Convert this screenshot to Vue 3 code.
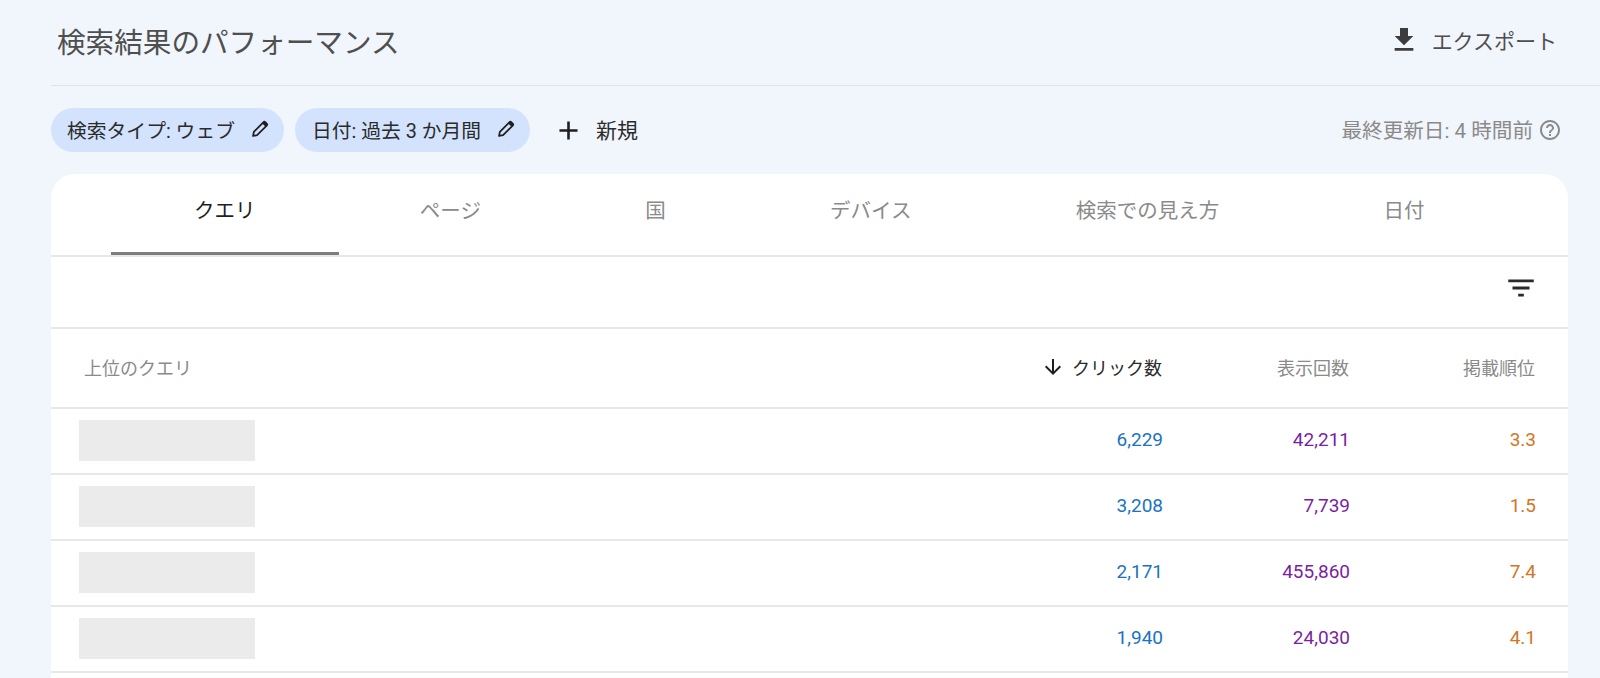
<script setup>
const tabs = [
  { label: 'クエリ', active: true },
  { label: 'ページ' },
  { label: '国' },
  { label: 'デバイス' },
  { label: '検索での見え方' },
  { label: '日付' },
]

const rows = [
  { clicks: '6,229', impressions: '42,211', position: '3.3' },
  { clicks: '3,208', impressions: '7,739', position: '1.5' },
  { clicks: '2,171', impressions: '455,860', position: '7.4' },
  { clicks: '1,940', impressions: '24,030', position: '4.1' },
]

// narrow outlined pencil, the filled part is the cap
const pencilBody = 'M4.4 19.6l.9-4.4L15.6 4.7a1.7 1.7 0 0 1 2.4 0l1.3 1.3a1.7 1.7 0 0 1 0 2.4L8.8 18.7z'
const pencilCap = 'M14.4 5.9l1.2-1.2a1.7 1.7 0 0 1 2.4 0l1.3 1.3a1.7 1.7 0 0 1 0 2.4l-1.2 1.2z'
</script>

<template>
  <div class="page">
    <header class="top-bar">
      <h1 class="title">検索結果のパフォーマンス</h1>
      <div class="export">
        <svg class="export-icon" viewBox="0 0 24 24"><path d="M19 9h-4V3H9v6H5l7 7 7-7zM5 18v2h14v-2H5z" /></svg>
        <span>エクスポート</span>
      </div>
    </header>

    <div class="filters">
      <div class="chip">
        <span>検索タイプ: ウェブ</span>
        <svg class="chip-icon" viewBox="0 0 24 24">
          <path class="pencil-body" :d="pencilBody" />
          <path class="pencil-cap" :d="pencilCap" />
        </svg>
      </div>
      <div class="chip chip-date">
        <span>日付: 過去 3 か月間</span>
        <svg class="chip-icon" viewBox="0 0 24 24">
          <path class="pencil-body" :d="pencilBody" />
          <path class="pencil-cap" :d="pencilCap" />
        </svg>
      </div>
      <div class="new-filter">
        <svg class="add-icon" viewBox="0 0 24 24"><path d="M19 13h-6v6h-2v-6H5v-2h6V5h2v6h6v2z" /></svg>
        <span class="new-label">新規</span>
      </div>
      <div class="updated">
        <span class="updated-label">最終更新日: 4 時間前</span>
        <svg class="help-icon" viewBox="0 0 24 24"><path d="M11 18h2v-2h-2v2zm1-16C6.48 2 2 6.48 2 12s4.48 10 10 10 10-4.48 10-10S17.52 2 12 2zm0 18c-4.41 0-8-3.59-8-8s3.59-8 8-8 8 3.59 8 8-3.59 8-8 8zm0-14c-2.21 0-4 1.79-4 4h2c0-1.1.9-2 2-2s2 .9 2 2c0 2-3 1.75-3 5h2c0-2.25 3-2.5 3-5 0-2.21-1.79-4-4-4z" /></svg>
      </div>
    </div>

    <section class="card">
      <nav class="tabs">
        <div v-for="tab in tabs" :key="tab.label" class="tab" :class="{ active: tab.active }">
          {{ tab.label }}
        </div>
      </nav>

      <div class="toolbar">
        <svg class="filter-icon" viewBox="0 0 24 24"><path d="M10 18h4v-2h-4v2zM3 6v2h18V6H3zm3 7h12v-2H6v2z" /></svg>
      </div>

      <div class="table-row table-head">
        <div class="head-query">上位のクエリ</div>
        <div class="head-sorted">
          <svg class="sort-icon" viewBox="0 0 24 24"><path d="M20 12l-1.41-1.41L13 16.17V4h-2v12.17l-5.58-5.59L4 12l8 8 8-8z" /></svg>
          <span>クリック数</span>
        </div>
        <div class="num">表示回数</div>
        <div class="num">掲載順位</div>
      </div>

      <div v-for="row in rows" :key="row.clicks" class="table-row data-row">
        <div class="placeholder"></div>
        <div class="num clicks">{{ row.clicks }}</div>
        <div class="num impressions">{{ row.impressions }}</div>
        <div class="num position">{{ row.position }}</div>
      </div>
    </section>
  </div>
</template>

<style>
html,
body {
  margin: 0;
  overflow: hidden;
}
</style>

<style scoped>
.page {
  height: 678px;
  display: flex;
  flex-direction: column;
  overflow: hidden;
  background: #f1f5fc;
  font-family: Roboto, "Noto Sans CJK JP", sans-serif;
}

.top-bar {
  height: 86px;
  margin-left: 51px;
  padding: 0 43px 5px 6px;
  box-sizing: border-box;
  display: flex;
  align-items: center;
  justify-content: space-between;
  border-bottom: 1px solid #e0e2e6;
  flex-shrink: 0;
}

.title {
  margin: 0;
  font-size: 28.6px;
  font-weight: 400;
  color: #4f4f4f;
}

.export {
  display: flex;
  align-items: center;
  gap: 12px;
  font-size: 21px;
  color: #4f4f4f;
}

.export-icon {
  width: 32px;
  height: 32px;
  fill: #3c3c3c;
}

.filters {
  margin: 22px 32px 22px 51px;
  height: 44px;
  display: flex;
  align-items: center;
  flex-shrink: 0;
}

.chip {
  height: 44px;
  padding: 0 13px 2px 16px;
  box-sizing: border-box;
  display: flex;
  align-items: center;
  gap: 14px;
  border-radius: 22px;
  background: #d3e3fd;
  font-size: 19.8px;
  color: #2b2b2b;
}

.chip-date {
  margin-left: 11px;
  padding-left: 17px;
}

.chip-icon {
  width: 22px;
  height: 22px;
}

.pencil-body {
  fill: none;
  stroke: #1f1f1f;
  stroke-width: 1.9;
  stroke-linejoin: round;
}

.pencil-cap {
  fill: #1f1f1f;
}

.new-filter {
  margin-left: 23px;
  display: flex;
  align-items: center;
  gap: 12px;
  font-size: 21px;
  color: #2b2b2b;
}

.new-label {
  padding-bottom: 2px;
}

.add-icon {
  width: 31px;
  height: 31px;
  fill: #1f1f1f;
}

.updated {
  margin-left: auto;
  margin-right: 6px;
  display: flex;
  align-items: center;
  gap: 5px;
  font-size: 20.6px;
  color: #8a8a8a;
}

.updated-label {
  padding-bottom: 2px;
}

.help-icon {
  width: 24px;
  height: 24px;
  fill: #8a8a8a;
}

.card {
  flex: 1;
  margin: 0 32px 0 51px;
  border-radius: 24px 24px 0 0;
  background: #fff;
}

.tabs {
  height: 81px;
  padding-left: 60px;
  display: flex;
  border-bottom: 2px solid #e8e8e8;
}

.tab {
  padding: 0 83px 8px;
  height: 81px;
  box-sizing: border-box;
  display: flex;
  align-items: center;
  border-bottom: 3px solid transparent;
  font-size: 20.5px;
  margin-right: -1.7px;
  color: #8a8a8a;
}

.tab.active {
  color: #1f1f1f;
  border-bottom-color: #7d7d7d;
}

.toolbar {
  height: 70px;
  padding-right: 30px;
  display: flex;
  align-items: flex-start;
  justify-content: flex-end;
  border-bottom: 2px solid #e8e8e8;
}

.filter-icon {
  width: 34px;
  height: 34px;
  margin-top: 14px;
  fill: #2b2b2b;
}

.table-row {
  display: grid;
  grid-template-columns: 1fr 200px 187px 186px;
  align-items: center;
  padding-right: 32px;
  box-sizing: border-box;
  border-bottom: 2px solid #e8e8e8;
}

.table-head {
  height: 80px;
  padding-bottom: 2px;
  padding-right: 33px;
  font-size: 18px;
  color: #8a8a8a;
}

.head-query {
  padding-left: 33px;
}

.head-sorted {
  display: flex;
  align-items: center;
  justify-content: flex-end;
  gap: 7px;
  color: #2b2b2b;
}

.sort-icon {
  width: 24px;
  height: 24px;
  fill: #1f1f1f;
}

.data-row {
  height: 66px;
  padding-bottom: 2px;
  font-size: 19px;
}

.data-row .num {
  padding-bottom: 2px;
}

.placeholder {
  width: 176px;
  height: 41px;
  margin-left: 28px;
  background: #ebebeb;
}

.num {
  text-align: right;
}

.clicks {
  color: #1a73c4;
}

.impressions {
  color: #7b1fa2;
}

.position {
  color: #d2761f;
}
</style>
